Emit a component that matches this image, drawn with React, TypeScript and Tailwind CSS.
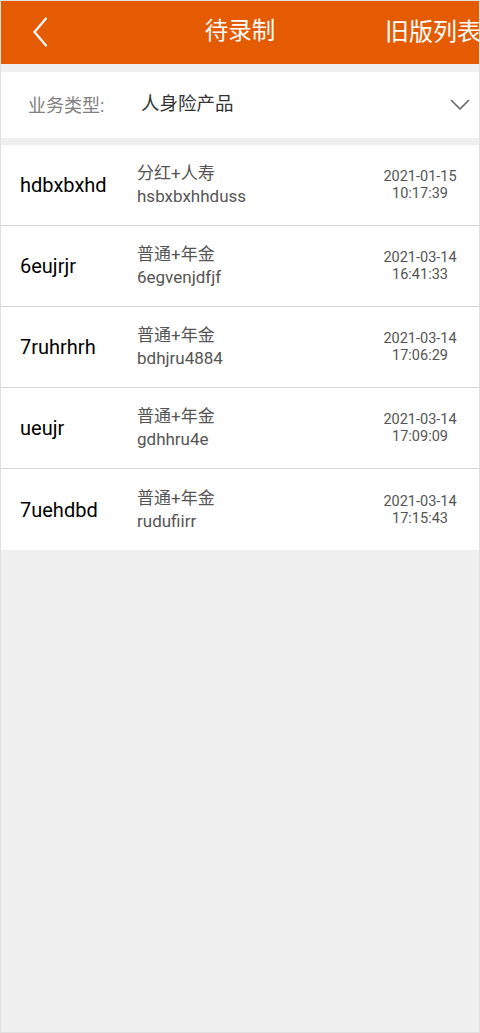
interface Draft {
  name: string;
  product: string;
  code: string;
  date: string;
  time: string;
}

const drafts: Draft[] = [
  { name: 'hdbxbxhd', product: '分红+人寿', code: 'hsbxbxhhduss', date: '2021-01-15', time: '10:17:39' },
  { name: '6eujrjr', product: '普通+年金', code: '6egvenjdfjf', date: '2021-03-14', time: '16:41:33' },
  { name: '7ruhrhrh', product: '普通+年金', code: 'bdhjru4884', date: '2021-03-14', time: '17:06:29' },
  { name: 'ueujr', product: '普通+年金', code: 'gdhhru4e', date: '2021-03-14', time: '17:09:09' },
  { name: '7uehdbd', product: '普通+年金', code: 'rudufiirr', date: '2021-03-14', time: '17:15:43' },
];

const font = 'font-[Roboto,"Noto_Sans_CJK_SC",sans-serif]';

export default function App() {
  return (
    <div className={`h-[1033px] w-[480px] overflow-hidden border border-[#e0e0e0] bg-[#efefef] ${font}`}>
      {/* Title bar */}
      <div className="-mx-px -mt-px flex h-[64px] items-center bg-[#e55b02]">
        <div className="flex w-[140px] items-center pl-[32px]">
          <svg width="16" height="30" viewBox="0 0 16 30" fill="none">
            <polyline points="14,1.5 2.5,15 14,28.5" stroke="white" strokeWidth="2.2" strokeLinecap="round" strokeLinejoin="round" />
          </svg>
        </div>
        <div className="flex-1 text-center text-[23.5px] text-white">待录制</div>
        <div className="w-[140px] whitespace-nowrap pl-[45px] text-[24px] text-white">旧版列表</div>
      </div>

      {/* Filter */}
      <div className="mt-[8px] flex h-[66px] items-center bg-white pl-[27px] pr-[9px]">
        <span className="w-[113px] text-[18px] text-[#808080]">业务类型:</span>
        <span className="flex-1 text-[18.5px] text-[#333]">人身险产品</span>
        <svg width="20" height="12" viewBox="0 0 20 12" fill="none">
          <polyline points="1.5,1.5 10,10 18.5,1.5" stroke="#666" strokeWidth="1.6" strokeLinecap="round" strokeLinejoin="round" />
        </svg>
      </div>

      {/* List */}
      <div className="mt-[7px] bg-white">
        {drafts.map((d, i) => (
          <div
            key={d.name}
            className={`flex h-[81px] items-center ${i < drafts.length - 1 ? 'border-b border-[#d6d6d6]' : ''}`}
          >
            <div className="w-[136px] pl-[19px] text-[20px] text-black">{d.name}</div>
            <div className="flex-1 leading-[23px]">
              <div className="text-[17px] text-[#555]">{d.product}</div>
              <div className="text-[17px] text-[#555]">{d.code}</div>
            </div>
            <div className="w-[98px] pr-[20px] text-center text-[14.5px] leading-[17px] text-[#555]">
              <div>{d.date}</div>
              <div>{d.time}</div>
            </div>
          </div>
        ))}
      </div>
    </div>
  );
}
